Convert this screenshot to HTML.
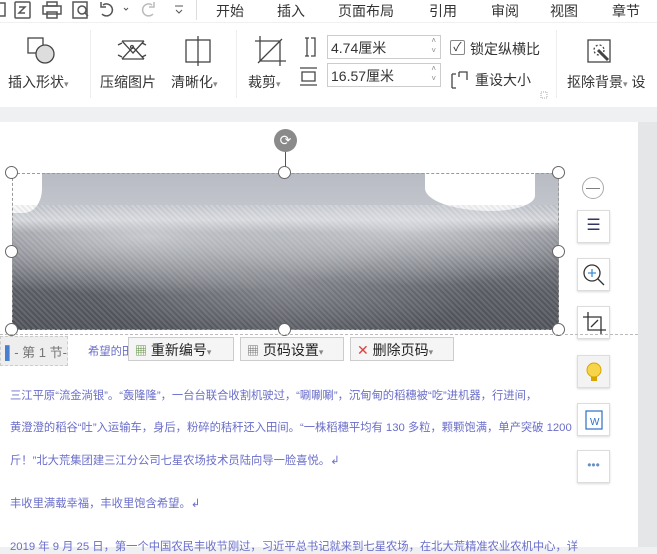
<!DOCTYPE html>
<html><head><meta charset="utf-8"><style>
*{margin:0;padding:0;box-sizing:border-box}
body{width:657px;height:547px;overflow:hidden;background:#eef0f2;font-family:"Liberation Sans","Noto Sans CJK SC",sans-serif;position:relative;color:#333}
.a{position:absolute;white-space:nowrap}
.tab{font-size:14px;color:#333;top:1px}
.lbl{font-size:14px;color:#333}
.h{position:absolute;width:13px;height:13px;border:1px solid #666;border-radius:50%;background:#fff}
.side{position:absolute;left:577px;width:33px;height:33px;background:#fff;border:1px solid #ddd;box-shadow:0 1px 2px rgba(0,0,0,.15)}
.p{font-size:11.3px;color:#6a6ec9}
.btn{position:absolute;top:337px;height:24px;background:#f5f5f5;border:1px solid #ccc;font-size:14px;color:#222;padding:2px 6px}
</style></head><body>
<div class="a" style="left:0;top:0;width:657px;height:107px;background:#fff"></div>
<div class="a" style="left:0;top:22px;width:657px;height:1px;background:#f0f0f0"></div>
<svg class="a" style="left:0;top:0" width="200" height="22" fill="none" stroke="#555" stroke-width="1.5">
<rect x="-3" y="3" width="8" height="13"/>
<rect x="15" y="2" width="15" height="16" rx="1"/><path d="M19 7h6l-6 6h6"/>
<rect x="43" y="6" width="18" height="8"/><rect x="47" y="2" width="10" height="4"/><rect x="47" y="12" width="10" height="6"/>
<rect x="73" y="2" width="14" height="16"/><circle cx="82" cy="10" r="4"/><path d="M85 13l3 3"/>
<path d="M103 5a6 6 0 1 1-1 9M101 2v5h5"/><path d="M124 8l2 2 2-2" stroke-width="1"/>
<path stroke="#bbb" d="M152 5a6 6 0 1 0 1 9M154 2v5h-5"/>
<path d="M175 6h8M176 10l3 3 3-3" stroke-width="1"/>
</svg>
<div class="a" style="left:196px;top:0;width:1px;height:20px;background:#ddd"></div>
<div class="a tab" style="left:216px">开始</div>
<div class="a tab" style="left:277px">插入</div>
<div class="a tab" style="left:338px">页面布局</div>
<div class="a tab" style="left:429px">引用</div>
<div class="a tab" style="left:491px">审阅</div>
<div class="a tab" style="left:550px">视图</div>
<div class="a tab" style="left:612px">章节</div>
<svg class="a" style="left:0;top:30" width="657" height="70" fill="none" stroke="#444" stroke-width="1.3">
<rect x="28" y="8" width="15" height="15"/><circle cx="45" cy="24" r="9" fill="#ddd"/>
<path d="M118 15l4-2M118 25l4 2M142 13l4 2M142 27l4-2"/><path d="M122 11l11 12 11-12M122 29l11-12 11 12"/><path d="M122 29h22M122 11h22"/><circle cx="132" cy="17" r="1.5"/>
<rect x="186" y="10" width="24" height="22"/><path d="M198 6v30"/>
<path d="M260 6v25h26M255 11h25v25M258 33l24-24"/>
<path d="M305 8h4M305 26h4M307 8v18M311 8h4v18h-4"/>
<path d="M300 38h17M300 55h17M302 42h13v9h-13z"/>
<rect x="588" y="10" width="22" height="22"/><circle cx="599" cy="20" r="5" stroke-dasharray="2 2"/><path d="M598 20l10 10" stroke-width="3"/>
<path d="M452 44v14M452 44h4M452 58h4M459 42h8v8M459 42v5"/>
<rect x="541" y="62" width="6" height="6" stroke="#aaa" stroke-width="1" stroke-dasharray="1 1"/>
</svg>
<div class="a" style="left:90px;top:30px;width:1px;height:68px;background:#eee"></div>
<div class="a" style="left:236px;top:30px;width:1px;height:68px;background:#eee"></div>
<div class="a" style="left:556px;top:30px;width:1px;height:68px;background:#eee"></div>
<div class="a lbl" style="left:8px;top:72px">插入形状<span style="font-size:9px;color:#888">▾</span></div>
<div class="a lbl" style="left:100px;top:72px">压缩图片</div>
<div class="a lbl" style="left:171px;top:72px">清晰化<span style="font-size:9px;color:#888">▾</span></div>
<div class="a lbl" style="left:248px;top:72px">裁剪<span style="font-size:9px;color:#888">▾</span></div>
<div class="a" style="left:327px;top:35px;width:114px;height:24px;border:1px solid #ccc;background:#fff;font-size:14px;padding:2px 3px">4.74厘米<span style="position:absolute;right:4px;top:0;font-size:8px;color:#888;line-height:10px">˄<br>˅</span></div>
<div class="a" style="left:327px;top:63px;width:114px;height:24px;border:1px solid #ccc;background:#fff;font-size:14px;padding:2px 3px">16.57厘米<span style="position:absolute;right:4px;top:0;font-size:8px;color:#888;line-height:10px">˄<br>˅</span></div>
<div class="a" style="left:450px;top:40px;width:15px;height:15px;border:1px solid #888;border-radius:2px;font-size:12px;line-height:13px;text-align:center">✓</div>
<div class="a lbl" style="left:470px;top:39px">锁定纵横比</div>
<div class="a lbl" style="left:475px;top:70px">重设大小</div>
<div class="a lbl" style="left:567px;top:72px">抠除背景<span style="font-size:9px;color:#888">▾</span> 设</div>
<div class="a" style="left:0;top:122px;width:638px;height:425px;background:#fff"></div>
<div class="a" style="left:638px;top:122px;width:19px;height:425px;background:#e4e6e8"></div>
<!-- image -->
<div class="a" style="left:12px;top:173px;width:547px;height:157px;background:linear-gradient(180deg,#b8bbc3 0,#c2c5cc 22%,#d6d8dc 30%,#8e9198 38%,#7a7d84 55%,#5f6269 75%,#54575e 100%)"></div>
<div class="a" style="left:12px;top:173px;width:30px;height:40px;background:#fff;border-radius:0 0 60% 0"></div>
<div class="a" style="left:425px;top:173px;width:110px;height:38px;background:#fff;border-radius:0 0 40% 60%"></div>
<div class="a" style="left:12px;top:205px;width:547px;height:125px;background:radial-gradient(ellipse at 25% 25%,rgba(225,227,232,.7),transparent 45%),radial-gradient(ellipse at 72% 18%,rgba(225,227,232,.7),transparent 40%),radial-gradient(ellipse at 50% 65%,rgba(200,202,208,.35),transparent 50%),repeating-linear-gradient(45deg,rgba(255,255,255,.08) 0 2px,rgba(0,0,0,.08) 2px 4px)"></div>
<div class="a" style="left:12px;top:173px;width:547px;height:157px;border:1px dashed #999"></div>
<div class="a" style="left:285px;top:147px;width:1px;height:26px;background:#555"></div>
<div class="a" style="left:274px;top:129px;width:23px;height:23px;border-radius:50%;background:#8a8a8a;color:#fff;font-size:14px;text-align:center;line-height:23px">⟳</div>
<div class="h" style="left:5px;top:166px"></div><div class="h" style="left:278px;top:166px"></div><div class="h" style="left:552px;top:166px"></div>
<div class="h" style="left:5px;top:245px"></div><div class="h" style="left:552px;top:245px"></div>
<div class="h" style="left:5px;top:323px"></div><div class="h" style="left:278px;top:323px"></div><div class="h" style="left:552px;top:323px"></div>
<div class="a" style="left:582px;top:177px;width:22px;height:22px;border:1px solid #aaa;border-radius:50%;text-align:center;line-height:19px;color:#777;font-size:14px">—</div>
<div class="side" style="top:210px;font-size:16px;text-align:center;line-height:30px;color:#336">☰</div>
<div class="side" style="top:258px"><svg width="31" height="31" fill="none" stroke="#333" stroke-width="1.3"><circle cx="14" cy="14" r="8"/><path d="M20 20l6 6"/><path d="M14 10v8M10 14h8" stroke="#3a8fd8"/></svg></div>
<div class="side" style="top:306px"><svg width="31" height="31" fill="none" stroke="#333" stroke-width="1.3"><path d="M10 5v18h18M5 10h18v18M13 20l7-7"/></svg></div>
<div class="side" style="top:355px;background:#f3f3f3"><svg width="31" height="31"><circle cx="16" cy="14" r="7" fill="#f7d54a" stroke="#d9a400"/><rect x="13" y="21" width="6" height="4" fill="#d9a400"/></svg></div>
<div class="side" style="top:403px"><svg width="31" height="31" fill="none" stroke="#2d6fc1" stroke-width="1.2"><rect x="8" y="7" width="16" height="18"/><text x="12" y="21" font-size="10" fill="#2d6fc1" stroke="none" font-family="Liberation Sans">W</text></svg></div>
<div class="side" style="top:450px;text-align:center;line-height:28px;color:#6a8fc4;font-size:12px">•••</div>
<div class="a" style="left:0;top:334px;width:638px;border-top:1px dashed #bbb"></div>
<div class="a" style="left:0;top:336px;width:68px;height:30px;background:#eee;border:1px dashed #ccc;font-size:13px;color:#777;padding:5px 4px"><span style="color:#4a7fd0">▌</span>- 第 1 节-</div>
<div class="a p" style="left:88px;top:343px">希望的田</div>
<div class="btn" style="left:128px;width:106px"><span style="color:#5a8a3a;font-size:12px">▦</span> 重新编号<span style="font-size:9px;color:#888">▾</span></div>
<div class="btn" style="left:240px;width:104px"><span style="color:#666;font-size:12px">▦</span> 页码设置<span style="font-size:9px;color:#888">▾</span></div>
<div class="btn" style="left:350px;width:104px"><span style="color:#e04040">✕</span> 删除页码<span style="font-size:9px;color:#888">▾</span></div>
<div class="a p" style="left:10px;top:387px">三江平原“流金淌银”。“轰隆隆”，一台台联合收割机驶过，“唰唰唰”，沉甸甸的稻穗被“吃”进机器，行进间，</div>
<div class="a p" style="left:10px;top:419px">黄澄澄的稻谷“吐”入运输车，身后，粉碎的秸秆还入田间。“一株稻穗平均有 130 多粒，颗颗饱满，单产突破 1200</div>
<div class="a p" style="left:10px;top:452px">斤！”北大荒集团建三江分公司七星农场技术员陆向导一脸喜悦。↲</div>
<div class="a p" style="left:10px;top:495px">丰收里满载幸福，丰收里饱含希望。↲</div>
<div class="a p" style="left:10px;top:538px">2019 年 9 月 25 日，第一个中国农民丰收节刚过，习近平总书记就来到七星农场，在北大荒精准农业农机中心，详</div>
</body></html>
